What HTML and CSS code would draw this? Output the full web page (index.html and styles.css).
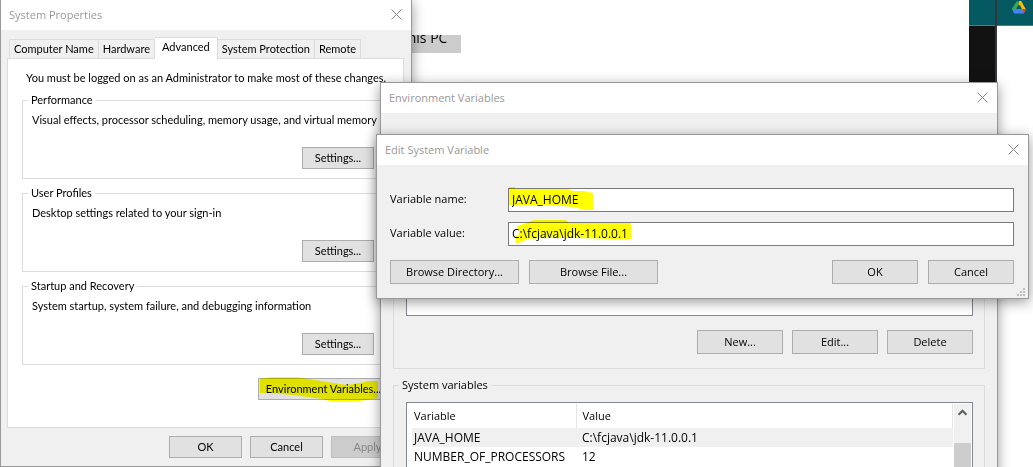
FILE: index.html
```html
<!DOCTYPE html>
<html lang="en">
<head>
<meta charset="utf-8">
<title>Environment Variables</title>
<link rel="stylesheet" href="styles.css">
</head>
<body>
<main class="desktop">
  <div class="background">
    <span class="drag-label"><span>This PC</span></span>
    <div class="taskline"></div>
    <span class="back-label">This PC</span>
    <div class="browser-edge"></div>
    <div class="browser-bar">
      <svg class="drive" viewBox="0 0 14 13" aria-hidden="true">
        <path fill="#34a853" d="M5 0h4L2.500 11 0 7.500z"/>
        <path fill="#fbbc04" d="M6 0h3l5 8.500h-4z"/>
        <path fill="#188038" d="M5 0h4L7 3.600z"/>
        <path fill="#fbbc04" d="M7 0h2l2 3.500-3.500 1L6.500 3z"/>
        <path fill="#4285f4" d="M0 8h14l-2.200 4.500H2.200z"/>
        <path fill="#ea4335" d="M10 8h4l-2.200 4.500z"/>
        <path fill="#045a60" d="M7 4l2.400 4H4.600z"/>
      </svg>
    </div>
    <div class="browser-split"></div>
  </div>

  <section class="window system" aria-label="System Properties">
    <header class="titlebar">
      <h2>System Properties</h2>
      <button class="close" aria-label="Close"><svg viewBox="0 0 11 11"><path d="M.5.500l10 10M10.500.500l-10 10"/></svg></button>
    </header>
    <div class="system-body">
      <div class="tabs" role="tablist">
        <button class="tab" role="tab">Computer Name</button>
        <button class="tab" role="tab">Hardware</button>
        <button class="tab active" role="tab" aria-selected="true">Advanced</button>
        <button class="tab" role="tab">System Protection</button>
        <button class="tab" role="tab">Remote</button>
      </div>
      <div class="pane" role="tabpanel">
        <p class="notice">You must be logged on as an Administrator to make most of these changes.</p>
        <fieldset class="setting">
          <legend>Performance</legend>
          <p>Visual effects, processor scheduling, memory usage, and virtual memory</p>
          <button class="btn small">Settings...</button>
        </fieldset>
        <fieldset class="setting">
          <legend>User Profiles</legend>
          <p>Desktop settings related to your sign-in</p>
          <button class="btn small">Settings...</button>
        </fieldset>
        <fieldset class="setting">
          <legend>Startup and Recovery</legend>
          <p>System startup, system failure, and debugging information</p>
          <button class="btn small">Settings...</button>
        </fieldset>
        <div class="env-row">
          <button class="btn env">Environment Variables...</button>
          <svg class="marker" viewBox="258 374 124 30" aria-hidden="true"><path d="M260 379l10-2h27l18 3 18 3 14 2 13-2 8-2h10v17l-12 2-13 2h-20l-10-3-31-4-20-2h-12z"/></svg>
        </div>
      </div>
      <div class="system-actions">
        <button class="btn">OK</button>
        <button class="btn">Cancel</button>
        <button class="btn" disabled>Apply</button>
      </div>
    </div>
  </section>

  <section class="window environment" aria-label="Environment Variables">
    <header class="titlebar">
      <h2>Environment Variables</h2>
      <button class="close" aria-label="Close"><svg viewBox="0 0 11 11"><path d="M.5.500l10 10M10.500.500l-10 10"/></svg></button>
    </header>
    <div class="environment-body">
      <div class="user-group">
        <div class="user-list"></div>
        <div class="actions">
          <button class="btn">New...</button>
          <button class="btn">Edit...</button>
          <button class="btn">Delete</button>
        </div>
      </div>
      <fieldset class="system-group">
        <legend>System variables</legend>
        <div class="list">
          <table>
            <thead><tr><th class="name-col">Variable</th><th>Value</th></tr></thead>
            <tbody>
              <tr class="selected"><td>JAVA_HOME</td><td>C:\fcjava\jdk-11.0.0.1</td></tr>
              <tr><td>NUMBER_OF_PROCESSORS</td><td>12</td></tr>
            </tbody>
          </table>
          <div class="scrollbar">
            <svg viewBox="0 0 8 6" aria-hidden="true"><path d="M.5 5L4 1.500 7.500 5"/></svg>
            <div class="thumb"></div>
          </div>
        </div>
      </fieldset>
    </div>
  </section>

  <section class="window edit" aria-label="Edit System Variable">
    <header class="titlebar">
      <h2>Edit System Variable</h2>
      <button class="close" aria-label="Close"><svg viewBox="0 0 11 11"><path d="M.5.500l10 10M10.500.500l-10 10"/></svg></button>
    </header>
    <form class="edit-body">
      <div class="field">
        <label for="var-name">Variable name:</label>
        <div class="entry">
          <input id="var-name" type="text" value="JAVA_HOME">
          <svg class="marker" viewBox="508 186 124 30" aria-hidden="true"><path d="M509 187h6v2h53l5 2h10l10 2v17h-9l-11-3-21-2h-43z"/></svg>
        </div>
      </div>
      <div class="field">
        <label for="var-value">Variable value:</label>
        <div class="entry">
          <input id="var-value" type="text" value="C:\fcjava\jdk-11.0.0.1">
          <svg class="marker" viewBox="508 219 124 30" aria-hidden="true"><path d="M517 225l9-3 8-3h32l3 3h62v16h-18l-35-1h-35l-17 1-3 3-7 1v-7l3-2v-4l-2-2z"/></svg>
        </div>
      </div>
      <div class="edit-actions">
        <button type="button" class="btn wide">Browse Directory...</button>
        <button type="button" class="btn wide">Browse File...</button>
        <button type="button" class="btn push">OK</button>
        <button type="button" class="btn">Cancel</button>
      </div>
    </form>
    <svg class="grip" viewBox="0 0 8 8" aria-hidden="true"><path d="M6 0h2v2H6zM3 3h2v2H3zM6 3h2v2H6zM0 6h2v2H0zM3 6h2v2H3zM6 6h2v2H6z"/></svg>
  </section>
</main>
</body>
</html>
```

FILE: styles.css
```css
* { box-sizing: border-box; }

body {
  margin: 0;
  background: #fff;
  color: #000;
  font: 11px/16px "Open Sans", "Noto Sans", sans-serif;
}

h2, p { margin: 0; }

button, input { font: inherit; color: inherit; }

.desktop {
  position: relative;
  height: 100vh;
  overflow: hidden;
}

/* Windows behind the dialogs */
.drag-label {
  position: absolute;
  left: 400px;
  top: 35px;
  width: 61px;
  height: 18px;
  background: #ccc;
  overflow: hidden;
  font-size: 14px;
  line-height: 18px;
}
.drag-label span { display: block; margin-top: -6px; }
.taskline {
  position: absolute;
  left: 0;
  bottom: 0;
  width: 313px;
  height: 12px;
  background: #c8c8c8;
}
.back-label {
  position: absolute;
  left: 340px;
  top: 455px;
  font-size: 14px;
}
.browser-bar {
  position: absolute;
  top: 0;
  right: 0;
  width: 64px;
  height: 26px;
  background: #045a60;
  border-bottom: 1px solid #3f8488;
}
.drive {
  position: absolute;
  right: 7px;
  top: 1px;
  width: 14px;
  height: 13px;
}
.browser-edge {
  position: absolute;
  top: 26px;
  right: 36px;
  width: 28px;
  height: 60px;
  background: #121212;
}
.browser-split {
  position: absolute;
  top: 0;
  right: 36px;
  width: 2px;
  height: 84px;
  background: #37353b;
}

/* Dialog frame */
.window {
  position: absolute;
  display: flex;
  flex-direction: column;
  background: #f0f0f0;
  border: 1px solid #999;
  box-shadow: 0 3px 12px rgba(0, 0, 0, .4);
}
.titlebar {
  display: flex;
  align-items: center;
  justify-content: space-between;
  flex: none;
  height: 30px;
  padding: 0 9px 0 8px;
  background: #fff;
  color: #999;
}
.titlebar h2 { font-size: 11px; font-weight: 400; }
.close {
  display: flex;
  padding: 0 0 2px;
  border: 0;
  background: none;
}
.close svg { width: 11px; height: 11px; fill: none; stroke: #888; }

.btn {
  width: 86px;
  height: 24px;
  padding: 0;
  border: 1px solid #adadad;
  background: #e1e1e1;
}
.btn:disabled { background: #ccc; border-color: #bfbfbf; color: #888; }

fieldset { min-width: 0; margin: 0; padding: 0; border: 1px solid #dcdcdc; }
legend { padding: 0 3px; }

.marker {
  position: absolute;
  width: 124px;
  height: 30px;
  fill: #ff0;
  mix-blend-mode: multiply;
  pointer-events: none;
}

/* System Properties */
.system {
  left: 0;
  top: -1px;
  width: 412px;
  font-family: Lato, "Liberation Sans", sans-serif;
}
.system .titlebar h2 { font-family: "Open Sans", sans-serif; }
.system-body { padding: 7px 7px 8px 6px; }
.system .btn { width: 73px; height: 22px; padding: 0 0 1px; }
.tabs { display: flex; align-items: flex-end; padding: 0 2px; }
.tab {
  height: 19px;
  padding: 0 4px 1px;
  border: 1px solid #dcdcdc;
  border-bottom: 0;
  border-left-width: 0;
  background: #f0f0f0;
  white-space: nowrap;
}
.tab:first-child { border-left-width: 1px; }
.tab.active {
  position: relative;
  height: 22px;
  margin-bottom: -1px;
  padding: 0 7px 3px;
  background: #fff;
}
.pane {
  padding: 11px 14px 27px 14px;
  border: 1px solid #dcdcdc;
  background: #fff;
}
.notice { padding: 0 0 6px 4px; white-space: nowrap; }
.setting {
  display: flex;
  flex-direction: column;
  margin-bottom: 6px;
  padding: 4px 14px 9px 9px;
}
.setting p { white-space: nowrap; }
.setting legend { margin-left: -4px; }
.system .setting .btn { width: 72px; margin-top: 19px; align-self: flex-end; }
.env-row {
  position: relative;
  display: flex;
  justify-content: flex-end;
  padding-top: 7px;
}
.system .btn.env { width: 131px; }
.env-row .marker { right: 7px; top: 3px; }
.system-actions {
  display: flex;
  justify-content: flex-end;
  gap: 8px;
  padding-top: 8px;
}

/* Environment Variables */
.environment {
  left: 380px;
  right: 35px;
  top: 82px;
  bottom: -120px;
}
.environment-body {
  display: flex;
  flex: 1;
  flex-direction: column;
  padding: 24px 12px 12px;
}
.user-group {
  padding: 12px 11px 14px 12px;
  border: 1px solid #dcdcdc;
}
.user-list {
  height: 166px;
  margin-bottom: 14px;
  border: 1px solid #828790;
  background: #fff;
}
.actions { display: flex; justify-content: flex-end; gap: 9px; }
.system-group {
  display: flex;
  flex: 1;
  flex-direction: column;
  margin-top: 8px;
  padding: 9px 11px 12px 12px;
}
.system-group legend { margin-left: -7px; }
.list {
  display: flex;
  flex: 1;
  align-items: stretch;
  padding: 1px 1px 1px 5px;
  border: 1px solid #828790;
  background: #fff;
}
table { flex: 1; align-self: flex-start; border-collapse: collapse; table-layout: fixed; }
th, td {
  height: 19px;
  padding: 0 0 0 6px;
  font-weight: 400;
  text-align: left;
}
td { font-size: 12px; }
th { height: 24px; border-right: 1px solid #e5e5e5; }
td:first-child, th:first-child { padding-left: 2px; }
.name-col { width: 164px; }
.selected { background: #f0f0f0; }
.scrollbar {
  display: flex;
  flex-direction: column;
  align-items: center;
  width: 17px;
  margin-left: 1px;
  background: #f0f0f0;
}
.scrollbar svg { width: 9px; height: 7px; margin: 5px 0 27px; fill: none; stroke: #606060; stroke-width: 2; }
.thumb { width: 100%; height: 60px; background: #cdcdcd; }

/* Edit System Variable */
.edit { left: 376px; right: 4px; top: 134px; }
.edit-body {
  display: flex;
  flex-direction: column;
  gap: 10px;
  padding: 23px 14px 14px 13px;
}
.field { display: flex; align-items: center; }
.field label { width: 118px; padding-bottom: 2px; }
.entry { position: relative; flex: 1; }
.entry input {
  display: block;
  width: 100%;
  height: 24px;
  padding: 0 3px 2px;
  border: 1px solid #7a7a7a;
  background: #fff;
  font-size: 12px;
}
.entry .marker { left: 0; top: -2px; }
.edit-actions { display: flex; gap: 10px; padding-top: 4px; }
.wide { width: 129px; }
.push { margin-left: auto; }
.grip {
  position: absolute;
  right: 3px;
  bottom: 2px;
  width: 8px;
  height: 8px;
  fill: #bfbfbf;
}
```
